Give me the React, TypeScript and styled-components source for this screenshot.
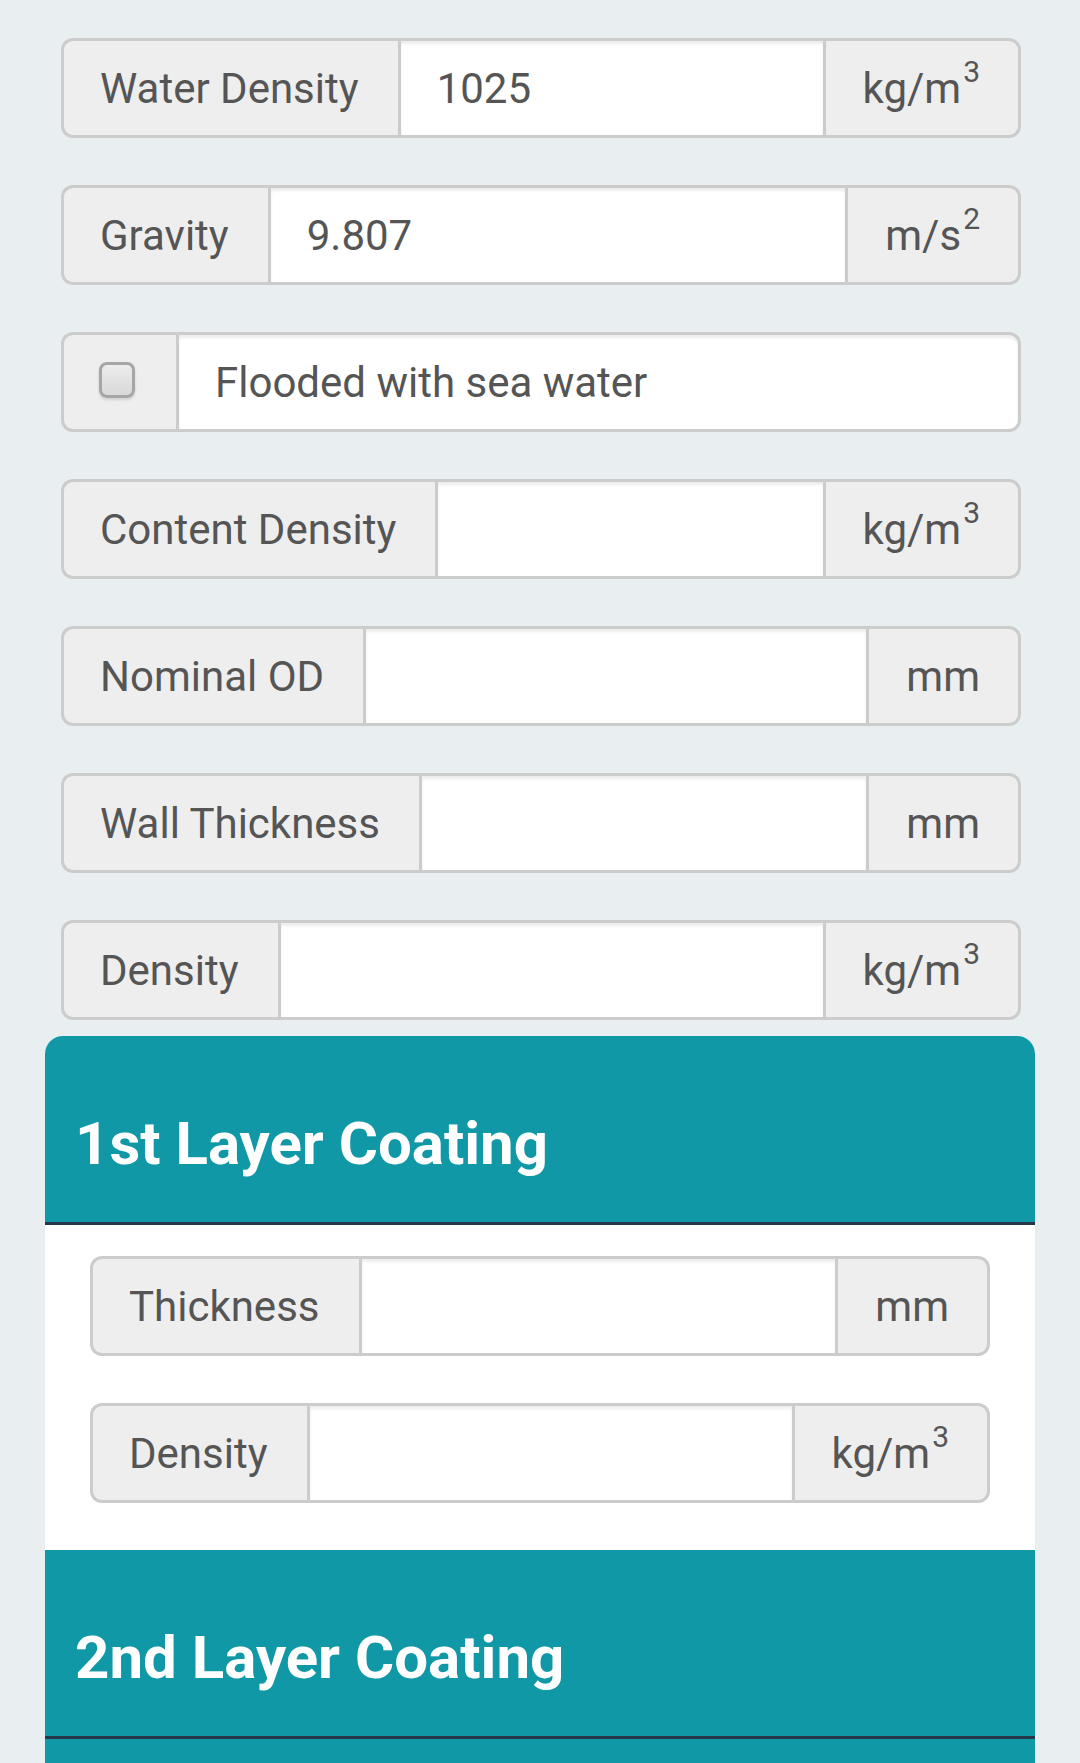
import { FC } from 'react';
import styled, { createGlobalStyle } from 'styled-components';

type Field = {
  label: string;
  value?: string;
  unit?: string;
  power?: string;
};

const topFields: Field[] = [
  { label: 'Water Density', value: '1025', unit: 'kg/m', power: '3' },
  { label: 'Gravity', value: '9.807', unit: 'm/s', power: '2' },
];

const moreFields: Field[] = [
  { label: 'Content Density', unit: 'kg/m', power: '3' },
  { label: 'Nominal OD', unit: 'mm' },
  { label: 'Wall Thickness', unit: 'mm' },
  { label: 'Density', unit: 'kg/m', power: '3' },
];

const coatingFields: Field[] = [
  { label: 'Thickness', unit: 'mm' },
  { label: 'Density', unit: 'kg/m', power: '3' },
];

const FieldRow: FC<{ field: Field; last?: boolean }> = ({ field, last }) => (
  <InputGroup last={last}>
    <Addon side="left">{field.label}</Addon>
    <Input defaultValue={field.value} />
    {field.unit && (
      <Addon side="right">
        {field.unit}
        {field.power && <Sup>{field.power}</Sup>}
      </Addon>
    )}
  </InputGroup>
);

export default function App() {
  return (
    <>
      <GlobalStyle />
      <Page>
        <Form>
          {topFields.map(f => <FieldRow key={f.label} field={f} />)}

          <InputGroup>
            <CheckAddon>
              <CheckBox type="checkbox" />
            </CheckAddon>
            <TextBox>Flooded with sea water</TextBox>
          </InputGroup>

          {moreFields.map((f, i) => (
            <FieldRow key={f.label} field={f} last={i === moreFields.length - 1} />
          ))}
        </Form>

        <Panel rounded>
          <PanelHeading>
            <PanelTitle>1st Layer Coating</PanelTitle>
          </PanelHeading>
          <PanelBody>
            {coatingFields.map(f => <FieldRow key={f.label} field={f} />)}
          </PanelBody>
        </Panel>

        <Panel>
          <PanelHeading>
            <PanelTitle>2nd Layer Coating</PanelTitle>
          </PanelHeading>
          <PanelTail />
        </Panel>
      </Page>
    </>
  );
}

const GlobalStyle = createGlobalStyle`
  html, body {
    margin: 0;
    padding: 0;
    background: #e9eef0;
    overflow: hidden;
  }
  * {
    box-sizing: border-box;
  }
  body {
    font-family: Roboto, 'Noto Sans', sans-serif;
  }
`;

const Page = styled.div`
  height: 1763px;
  overflow: hidden;
  padding: 38px 45px 0;
`;

const Form = styled.div`
  padding: 0 14px 0 16px;
`;

const InputGroup = styled.div<{ last?: boolean }>`
  display: flex;
  height: 100px;
  margin-bottom: ${props => props.last ? '16px' : '47px'};
`;

const Addon = styled.div<{ side: 'left' | 'right' }>`
  display: flex;
  align-items: center;
  flex-shrink: 0;
  padding: ${props => props.side === 'left' ? '0 39px 0 36px' : '0 38px 0 37px'};
  background: #eeeeee;
  border: 3px solid #cccccc;
  ${props => props.side === 'left'
    ? 'border-right: 0; border-radius: 12px 0 0 12px;'
    : 'border-left: 0; border-radius: 0 12px 12px 0;'}
  font-size: 42px;
  color: #555555;
  white-space: nowrap;
`;

const Sup = styled.sup`
  font-size: 30px;
  line-height: 0;
  position: relative;
  top: -0.52em;
  vertical-align: baseline;
  margin-left: 2px;
`;

const Input = styled.input`
  flex: 1;
  min-width: 0;
  height: 100%;
  padding: 0 36px;
  border: 3px solid #cccccc;
  border-radius: 0;
  background: #ffffff;
  box-shadow: inset 0 3px 3px rgba(0, 0, 0, 0.075);
  font-family: Roboto, 'Noto Sans', sans-serif;
  font-size: 42px;
  color: #555555;
  outline: none;
`;

const CheckAddon = styled.div`
  display: flex;
  align-items: center;
  flex-shrink: 0;
  padding: 0 41px 0 35px;
  background: #eeeeee;
  border: 3px solid #cccccc;
  border-right: 0;
  border-radius: 12px 0 0 12px;
`;

const CheckBox = styled.input`
  appearance: none;
  width: 36px;
  height: 36px;
  margin: -4px 0 0;
  border: 3px solid #a6a6a6;
  border-radius: 8px;
  background: linear-gradient(#ececec, #d9d9d9);
  box-shadow: 0 2px 3px rgba(0, 0, 0, 0.12);
`;

const TextBox = styled.div`
  flex: 1;
  display: flex;
  align-items: center;
  padding: 0 36px;
  border: 3px solid #cccccc;
  border-radius: 0 12px 12px 0;
  background: #ffffff;
  box-shadow: inset 0 3px 3px rgba(0, 0, 0, 0.075);
  font-size: 42px;
  color: #555555;
`;

const Panel = styled.div<{ rounded?: boolean }>`
  background: #ffffff;
  border-radius: ${props => props.rounded ? '18px 18px 0 0' : '0'};
  overflow: hidden;
`;

const PanelHeading = styled.div`
  height: 189px;
  padding: 78px 30px 0;
  background: #1198a6;
  border-bottom: 3px solid #27374a;
`;

const PanelTitle = styled.h3`
  margin: 0;
  font-size: 60px;
  line-height: 60px;
  font-weight: 700;
  color: #ffffff;
`;

const PanelBody = styled.div`
  padding: 31px 45px 0;
`;

const PanelTail = styled.div`
  height: 120px;
  background: #1198a6;
`;
